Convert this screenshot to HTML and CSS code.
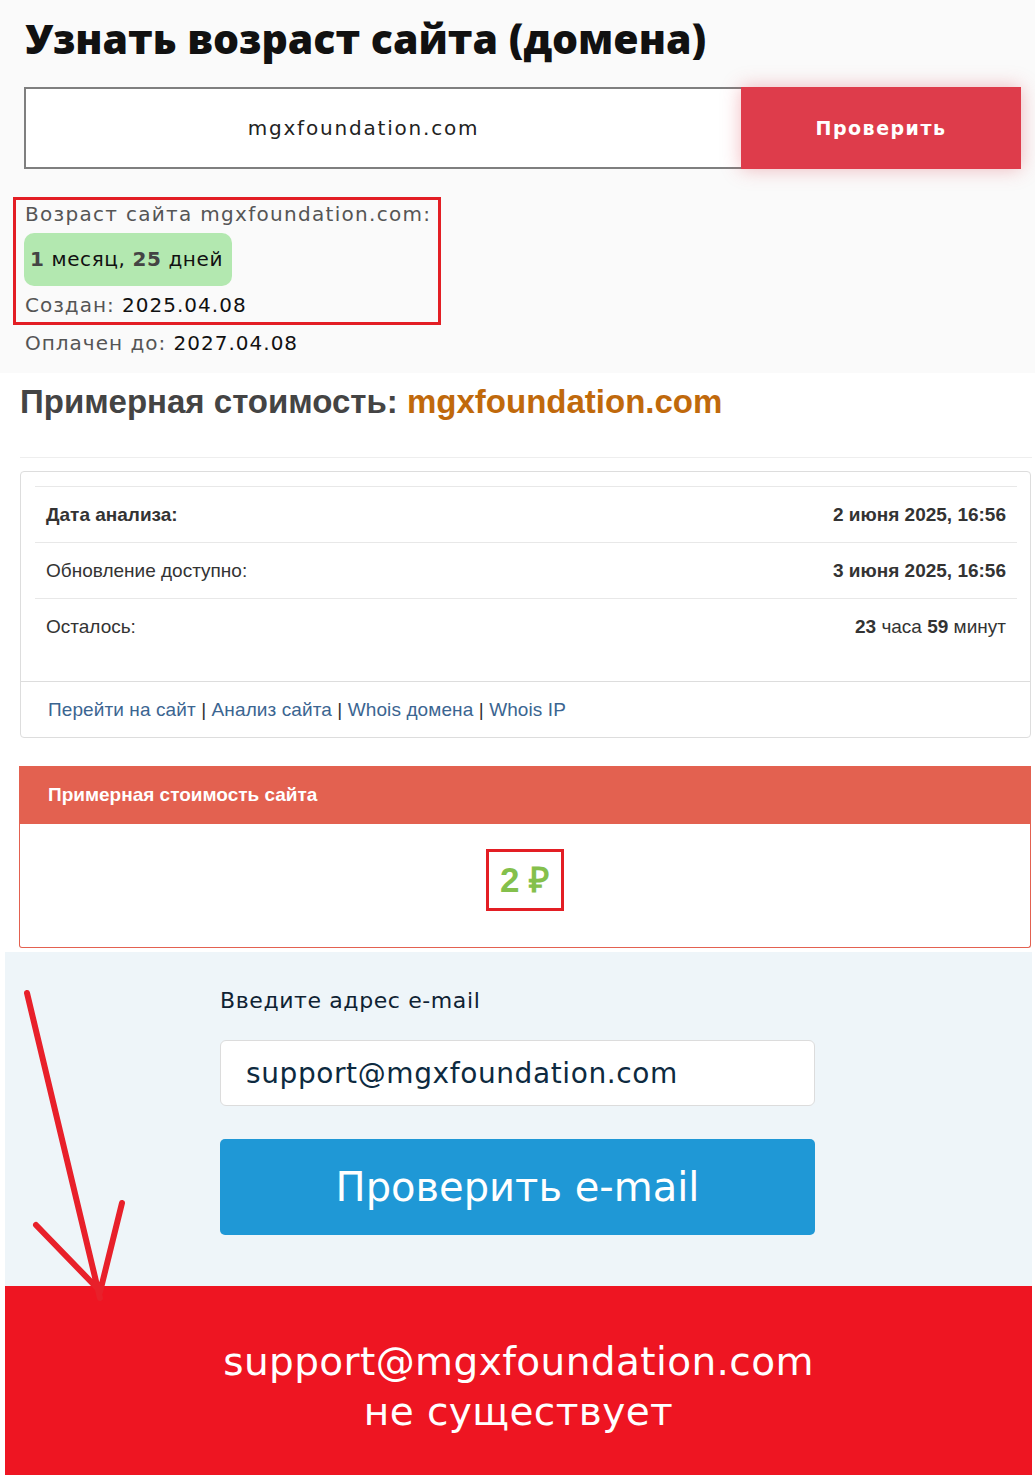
FILE: index.html
```html
<!DOCTYPE html>
<html lang="ru">
<head>
<meta charset="utf-8">
<title>Возраст сайта</title>
<link rel="stylesheet" href="styles.css">
</head>
<body>
<div class="page">
  <section class="age">
    <h1 class="age-title">Узнать возраст сайта (домена)</h1>
    <div class="check">
      <div class="domain-input">mgxfoundation.com</div>
      <div class="check-btn">Проверить</div>
    </div>
    <div class="highlight">
      <div class="age-line age-head muted">Возраст сайта mgxfoundation.com:</div>
      <div class="pill"><b>1</b> месяц, <b>25</b> дней</div>
      <div class="age-line"><span class="muted">Создан:</span> 2025.04.08</div>
    </div>
    <div class="age-line paid"><span class="muted">Оплачен до:</span> 2027.04.08</div>
  </section>

  <section class="cost">
    <h2 class="cost-title">Примерная стоимость: <span class="cost-domain">mgxfoundation.com</span></h2>
    <div class="rule"></div>
    <div class="panel">
      <div class="panel-body">
        <div class="row"><span class="label strong">Дата анализа:</span><span class="value strong">2 июня 2025, 16:56</span></div>
        <div class="row"><span class="label">Обновление доступно:</span><span class="value strong">3 июня 2025, 16:56</span></div>
        <div class="row"><span class="label">Осталось:</span><span class="value"><b>23</b> часа <b>59</b> минут</span></div>
      </div>
      <div class="panel-footer">
        <a>Перейти на сайт</a> | <a>Анализ сайта</a> | <a>Whois домена</a> | <a>Whois IP</a>
      </div>
    </div>
    <div class="price-panel">
      <div class="price-head">Примерная стоимость сайта</div>
      <div class="price-body"><span class="price">2 ₽</span></div>
    </div>
  </section>

  <section class="email">
    <div class="email-form">
      <div class="email-label">Введите адрес e-mail</div>
      <div class="email-input">support@mgxfoundation.com</div>
      <div class="email-btn">Проверить e-mail</div>
    </div>
  </section>

  <section class="verdict">
    <div>support@mgxfoundation.com</div>
    <div>не существует</div>
  </section>

  <svg class="arrow" width="160" height="360" viewBox="0 960 160 360">
    <path d="M27 993 L100 1298 M36 1225 L99 1290 M122 1203 L100 1292" fill="none" stroke="#e8202a" stroke-width="6" stroke-linecap="round"/>
  </svg>
</div>
</body>
</html>
```

FILE: styles.css
```css
body {
  margin: 0;
  background: #fff;
}

.page {
  position: relative;
  width: 1035px;
}

/* ---------- age section ---------- */
.age {
  background: #fafafa;
  padding: 14px 0 16px 25px;
  font-family: "DejaVu Sans", "Open Sans", sans-serif;
}

.age-title {
  margin: 0;
  font-family: "Open Sans", sans-serif;
  font-weight: 800;
  font-size: 41px;
  line-height: 48px;
  color: #111;
}

.check {
  display: flex;
  margin: 25px 0 0 -1px;
  height: 82px;
}

.domain-input {
  width: 717px;
  border: 2px solid #7f7f7f;
  border-right: none;
  background: #fff;
  display: flex;
  align-items: center;
  justify-content: center;
  font-size: 20px;
  letter-spacing: 1.8px;
  color: #222;
  box-sizing: border-box;
  padding-right: 40px;
}

.check-btn {
  width: 280px;
  background: #de3c4b;
  color: #fff;
  font-weight: bold;
  font-size: 19px;
  letter-spacing: 1.5px;
  display: flex;
  align-items: center;
  justify-content: center;
  box-shadow: 0 0 18px rgba(222, 60, 75, 0.35);
}

.highlight {
  margin: 28px 0 0 -12px;
  width: fit-content;
  border: 3px solid #e31e24;
  padding: 0 7px 3px 9px;
}

.age-line {
  font-size: 20px;
  letter-spacing: 1px;
  line-height: 28px;
  color: #111;
}

.age-head {
  letter-spacing: 1.3px;
}

.muted {
  color: #555;
}

.pill {
  display: inline-block;
  margin: 5px 0 5px -1px;
  padding: 12px 9px 13px 6px;
  background: #b3e8b0;
  border-radius: 10px;
  font-size: 20px;
  letter-spacing: 0.6px;
  line-height: 28px;
  color: #111;
}

.pill b {
  color: #444;
}

.paid {
  margin-top: 4px;
}

/* ---------- cost section ---------- */
.cost {
  padding-top: 9px;
  font-family: "Liberation Sans", Arial, sans-serif;
}

.cost-title {
  margin: 0 0 0 20px;
  font-size: 33px;
  line-height: 40px;
  color: #444;
}

.cost-domain {
  color: #c0690b;
}

.rule {
  margin: 35px 3px 13px 20px;
  height: 1px;
  background: #eee;
}

.panel {
  margin-left: 20px;
  width: 1011px;
  box-sizing: border-box;
  border: 1px solid #ddd;
  border-radius: 4px;
}

.panel-body {
  padding: 14px 13px 27px 14px;
}

.row {
  display: flex;
  justify-content: space-between;
  align-items: center;
  height: 55px;
  border-top: 1px solid #e8e8e8;
  padding: 0 11px;
  font-size: 19px;
  color: #333;
}

.strong {
  font-weight: bold;
}

.panel-footer {
  border-top: 1px solid #ddd;
  height: 55px;
  display: flex;
  align-items: center;
  padding-left: 27px;
  font-size: 19px;
  letter-spacing: 0.1px;
  color: #333;
  white-space: pre;
}

.panel-footer a {
  color: #3b6591;
}

.price-panel {
  margin: 28px 0 0 19px;
  width: 1012px;
  box-sizing: border-box;
  border: 1px solid #e36150;
  border-top: none;
  border-radius: 0 0 3px 3px;
}

.price-head {
  background: #e36150;
  height: 58px;
  display: flex;
  align-items: center;
  padding-left: 28px;
  color: #fff;
  font-weight: bold;
  font-size: 19px;
}

.price-body {
  height: 123px;
  display: flex;
  justify-content: center;
  align-items: flex-start;
  padding-top: 25px;
  box-sizing: border-box;
}

.price {
  border: 3px solid #e31e24;
  padding: 8px 12px 8px 11px;
  font-size: 35px;
  line-height: 40px;
  font-weight: bold;
  color: #84c04c;
}

/* ---------- email section ---------- */
.email {
  margin: 4px 3px 0 5px;
  background: #eef5f9;
  padding: 34px 0 51px 215px;
  font-family: "DejaVu Sans", sans-serif;
}

.email-form {
  width: 595px;
}

.email-label {
  font-size: 22px;
  letter-spacing: 0.6px;
  line-height: 30px;
  color: #0f2233;
}

.email-input {
  margin-top: 24px;
  height: 66px;
  box-sizing: border-box;
  border: 1px solid #dcdcdc;
  border-radius: 6px;
  background: #fff;
  display: flex;
  align-items: center;
  padding-left: 25px;
  font-size: 28px;
  letter-spacing: 0.6px;
  color: #0d2a40;
}

.email-btn {
  margin-top: 33px;
  height: 96px;
  border-radius: 5px;
  background: #1f98d6;
  display: flex;
  align-items: center;
  justify-content: center;
  color: #fff;
  font-size: 40px;
}

/* ---------- verdict ---------- */
.verdict {
  margin: 0 3px 0 5px;
  height: 189px;
  box-sizing: border-box;
  padding-top: 51px;
  background: #ee1522;
  color: #fff;
  text-align: center;
  font-family: "DejaVu Sans", sans-serif;
  font-size: 39px;
  letter-spacing: 0.4px;
  line-height: 50px;
}

/* ---------- annotation arrow ---------- */
.arrow {
  position: absolute;
  left: 0;
  top: 960px;
}
```
